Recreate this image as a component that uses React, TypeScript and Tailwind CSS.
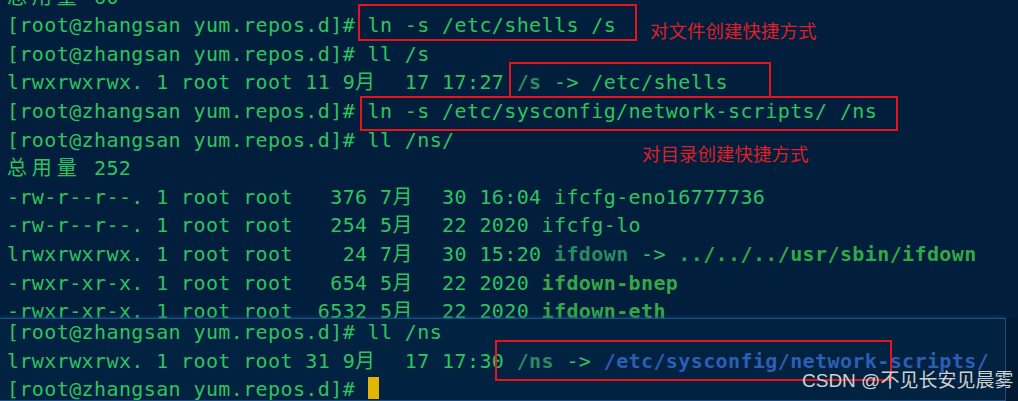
import React from 'react';

type Seg = [string, string?];

const CJK = /[\u3000-\u9fff\uff00-\uffef]/;

function Txt({ text }: { text: string }) {
  // terminal cells: CJK glyphs take two columns
  const parts: React.ReactNode[] = [];
  let buf = '';
  [...text].forEach((ch, i) => {
    if (CJK.test(ch)) {
      if (buf) parts.push(buf);
      buf = '';
      parts.push(
        <span key={i} className="inline-block w-[24.86px] tracking-normal">
          {ch}
        </span>
      );
    } else {
      buf += ch;
    }
  });
  if (buf) parts.push(buf);
  return <>{parts}</>;
}

function Line({ segs }: { segs: Seg[] }) {
  return (
    <div className="h-[28.6px] whitespace-pre">
      {segs.map(([t, cls], i) => (
        <span key={i} className={cls}>
          <Txt text={t} />
        </span>
      ))}
    </div>
  );
}

const P = '[root@zhangsan yum.repos.d]# ';
const LINK = 'text-[#2a8a62] font-bold';
const EXE = 'text-[#34a846] font-bold';
const DIR = 'text-[#2c5fb4] font-bold';

const top: Seg[][] = [
  [['总用量 60']],
  [[P + 'ln -s /etc/shells /s']],
  [[P + 'll /s']],
  [['lrwxrwxrwx. 1 root root 11 9月  17 17:27 '], ['/s', LINK], [' -> /etc/shells']],
  [[P + 'ln -s /etc/sysconfig/network-scripts/ /ns']],
  [[P + 'll /ns/']],
  [['总用量 252']],
  [['-rw-r--r--. 1 root root   376 7月  30 16:04 ifcfg-eno16777736']],
  [['-rw-r--r--. 1 root root   254 5月  22 2020 ifcfg-lo']],
  [['lrwxrwxrwx. 1 root root    24 7月  30 15:20 '], ['ifdown', LINK], [' -> '], ['../../../usr/sbin/ifdown', EXE]],
  [['-rwxr-xr-x. 1 root root   654 5月  22 2020 '], ['ifdown-bnep', EXE]],
  [['-rwxr-xr-x. 1 root root  6532 5月  22 2020 '], ['ifdown-eth', EXE]],
];

const bottom: Seg[][] = [
  [[P + 'll /ns']],
  [['lrwxrwxrwx. 1 root root 31 9月  17 17:30 '], ['/ns', LINK], [' -> '], ['/etc/sysconfig/network-scripts/', DIR]],
];

export default function App() {
  return (
    <div className="relative w-[1018px] h-[401px] overflow-hidden bg-[#011f3d] text-[#2fc35f] font-['DejaVu_Sans_Mono','Noto_Sans_CJK_SC',monospace] text-[20px] leading-[28.6px] tracking-[0.39px]">
      {/* main terminal scrollback */}
      <div className="h-[318px] overflow-hidden pl-[7px]">
        <div className="-mt-[17.3px]">
          {top.map((segs, i) => (
            <Line key={i} segs={segs} />
          ))}
        </div>
      </div>

      {/* second pasted terminal capture */}
      <div className="flex h-[83px]">
        <div className="w-[1006px] border-t border-r border-b border-[#1e4f82] bg-[#012241] pl-[7px] shadow-[0_0_4px_#1e4f82]">
          <div className="-mt-[1px]">
            {bottom.map((segs, i) => (
              <Line key={i} segs={segs} />
            ))}
            <div className="h-[28.6px] whitespace-pre flex items-start">
              <span>{P}</span>
              <span className="mt-[2px] inline-block w-[11px] h-[22px] bg-[#e2b600]" />
            </div>
          </div>
        </div>
        <div className="flex-1 bg-[#001a33]" />
      </div>

      {/* annotations */}
      <div className="absolute left-[358px] top-[4px] w-[279px] h-[37px] border-2 border-[#e8141c]" />
      <div className="absolute left-[509px] top-[62px] w-[262px] h-[36px] border-2 border-[#e8141c]" />
      <div className="absolute left-[360px] top-[96px] w-[538px] h-[35px] border-2 border-[#e8141c]" />
      <div className="absolute left-[495px] top-[340px] w-[397px] h-[41px] border-2 border-[#e8141c]" />

      <div className="absolute left-[650px] top-[18px] text-[18.5px] leading-[24px] tracking-normal text-[#dd2027] font-['Noto_Sans_CJK_SC',sans-serif]">
        对文件创建快捷方式
      </div>
      <div className="absolute left-[642px] top-[141px] text-[18.5px] leading-[24px] tracking-normal text-[#dd2027] font-['Noto_Sans_CJK_SC',sans-serif]">
        对目录创建快捷方式
      </div>

      <div className="absolute left-[802px] top-[369px] text-[19px] leading-[24px] tracking-normal text-[#d0d0d0] font-['Liberation_Sans','Noto_Sans_CJK_SC',sans-serif]">
        CSDN @不见长安见晨雾
      </div>
    </div>
  );
}
